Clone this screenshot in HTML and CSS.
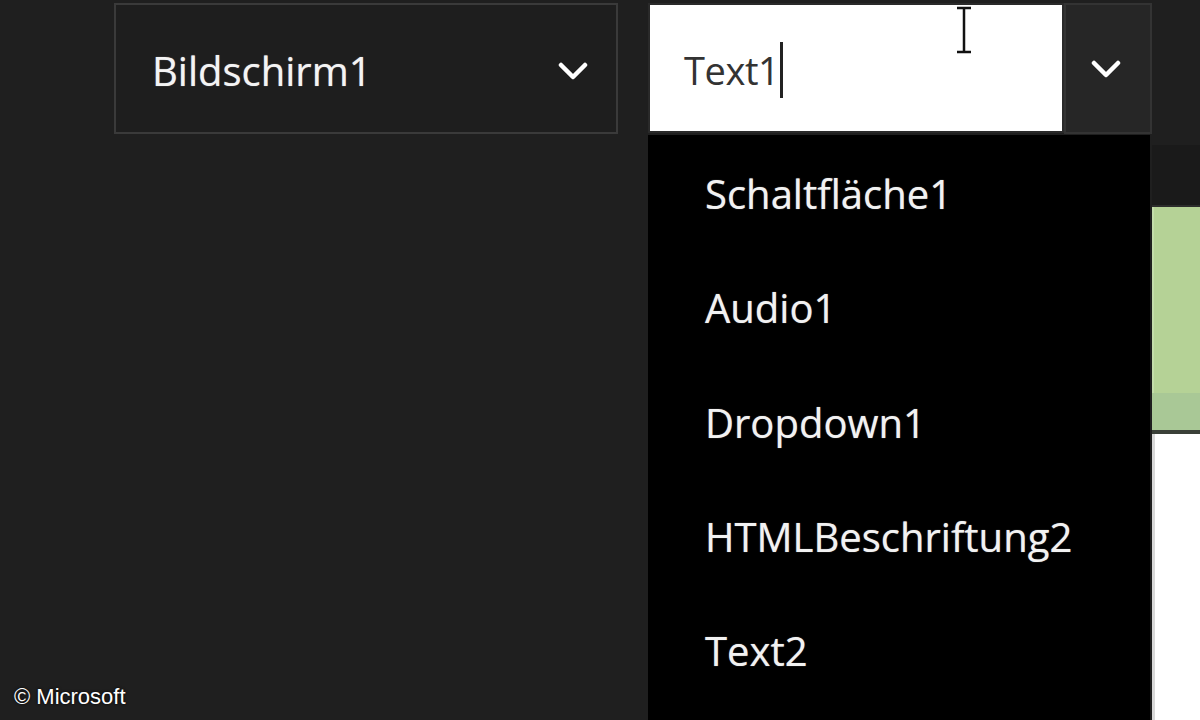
FILE: index.html
```html
<!DOCTYPE html>
<html lang="de">
<head>
<meta charset="utf-8">
<title>Dropdown</title>
<link rel="stylesheet" href="styles.css">
</head>
<body>
<div class="app">
  <div class="workspace">
    <div class="toolbar">
      <div class="select">
        <span class="select-label">Bildschirm1</span>
        <svg class="chevron" width="30" height="20" viewBox="0 0 30 20"><path d="M3 4 L15 16 L27 4" fill="none" stroke="#fff" stroke-width="4.5" stroke-linecap="round" stroke-linejoin="round"/></svg>
      </div>
      <div class="combo">
        <div class="combo-input">
          <span class="combo-text">Text1</span><span class="caret"></span>
          <svg class="ibeam" width="20" height="50" viewBox="0 0 20 50"><path d="M3 3 H17 M10 3 V47 M3 47 H17" fill="none" stroke="#fff" stroke-width="5"/><path d="M3 3 H17 M10 3 V47 M3 47 H17" fill="none" stroke="#111" stroke-width="2.5"/></svg>
        </div>
        <div class="combo-button">
          <svg class="chevron" width="30" height="20" viewBox="0 0 30 20"><path d="M3 4 L15 16 L27 4" fill="none" stroke="#fff" stroke-width="4.5" stroke-linecap="round" stroke-linejoin="round"/></svg>
        </div>
        <ul class="menu">
          <li>Schaltfläche1</li>
          <li>Audio1</li>
          <li>Dropdown1</li>
          <li>HTMLBeschriftung2</li>
          <li>Text2</li>
        </ul>
      </div>
    </div>
    <div class="copyright">© Microsoft</div>
  </div>
  <div class="canvas-edge">
    <div class="edge-top"></div>
    <div class="edge-green"></div>
    <div class="edge-green-dark"></div>
    <div class="edge-white"></div>
  </div>
</div>
</body>
</html>
```
FILE: styles.css
```css
* { box-sizing: border-box; }
html, body { margin: 0; padding: 0; }
body {
  background: #1f1f1f;
  font-family: "Open Sans", "Noto Sans", sans-serif;
  width: 1200px;
  height: 720px;
  overflow: hidden;
}
.app {
  display: flex;
  width: 1200px;
  height: 720px;
}
.workspace {
  position: relative;
  width: 1152px;
  height: 720px;
}
.toolbar {
  display: flex;
  align-items: flex-start;
  gap: 30px;
  padding: 3px 0 0 114px;
}
.select {
  width: 504px;
  height: 131px;
  border: 2px solid #3a3a3a;
  background: #1e1e1e;
  display: flex;
  align-items: center;
  justify-content: space-between;
  padding: 4px 28px 0 36px;
}
.select-label {
  color: #f4f4f4;
  font-size: 40px;
  text-shadow: 0 0 1px rgba(255,255,255,0.6);
}
.combo {
  position: relative;
  width: 504px;
  height: 131px;
  display: flex;
}
.combo-input {
  position: relative;
  width: 416px;
  height: 130px;
  background: #fff;
  border: 2px solid #2a2a2a;
  display: flex;
  align-items: center;
  padding: 4px 0 0 34px;
}
.combo-text {
  color: #333;
  font-size: 38px;
  letter-spacing: -0.4px;
}
.caret {
  display: inline-block;
  width: 3px;
  height: 56px;
  background: #222;
  margin-left: 1px;
}
.ibeam {
  position: absolute;
  left: 304px;
  top: 0;
}
.combo-button {
  width: 88px;
  height: 131px;
  background: #262626;
  border: 2px solid #333;
  display: flex;
  align-items: center;
  justify-content: center;
  padding-right: 4px;
}
.menu {
  position: absolute;
  left: 0;
  top: 132px;
  width: 502px;
  height: 600px;
  margin: 0;
  padding: 19px 0 0 57px;
  list-style: none;
  background: #000;
}
.menu li {
  color: #f2f2f2;
  font-size: 40px;
  height: 114.3px;
  line-height: 80px;
  text-shadow: 0 0 1px rgba(255,255,255,0.6);
}
.copyright {
  position: absolute;
  left: 14px;
  top: 684px;
  color: #fff;
  font-family: "Liberation Sans", Arial, sans-serif;
  font-size: 22px;
  text-shadow: 0 0 3px #000;
}
.canvas-edge {
  width: 48px;
  height: 720px;
  display: flex;
  flex-direction: column;
}
.edge-top {
  height: 207px;
  background: linear-gradient(#1f1f1f 0 145px, #1a1a1a 145px);
  border-bottom: 2px solid #2c2c2c;
}
.edge-green {
  height: 186px;
  background: #b5d296;
  border-left: 2px solid #c3dcaa;
}
.edge-green-dark {
  height: 41px;
  background: #a9c896;
  border-bottom: 4px solid #3a4038;
}
.edge-white {
  flex: 1;
  background: #fff;
  border-left: 3px solid #d8d8d8;
}
```
